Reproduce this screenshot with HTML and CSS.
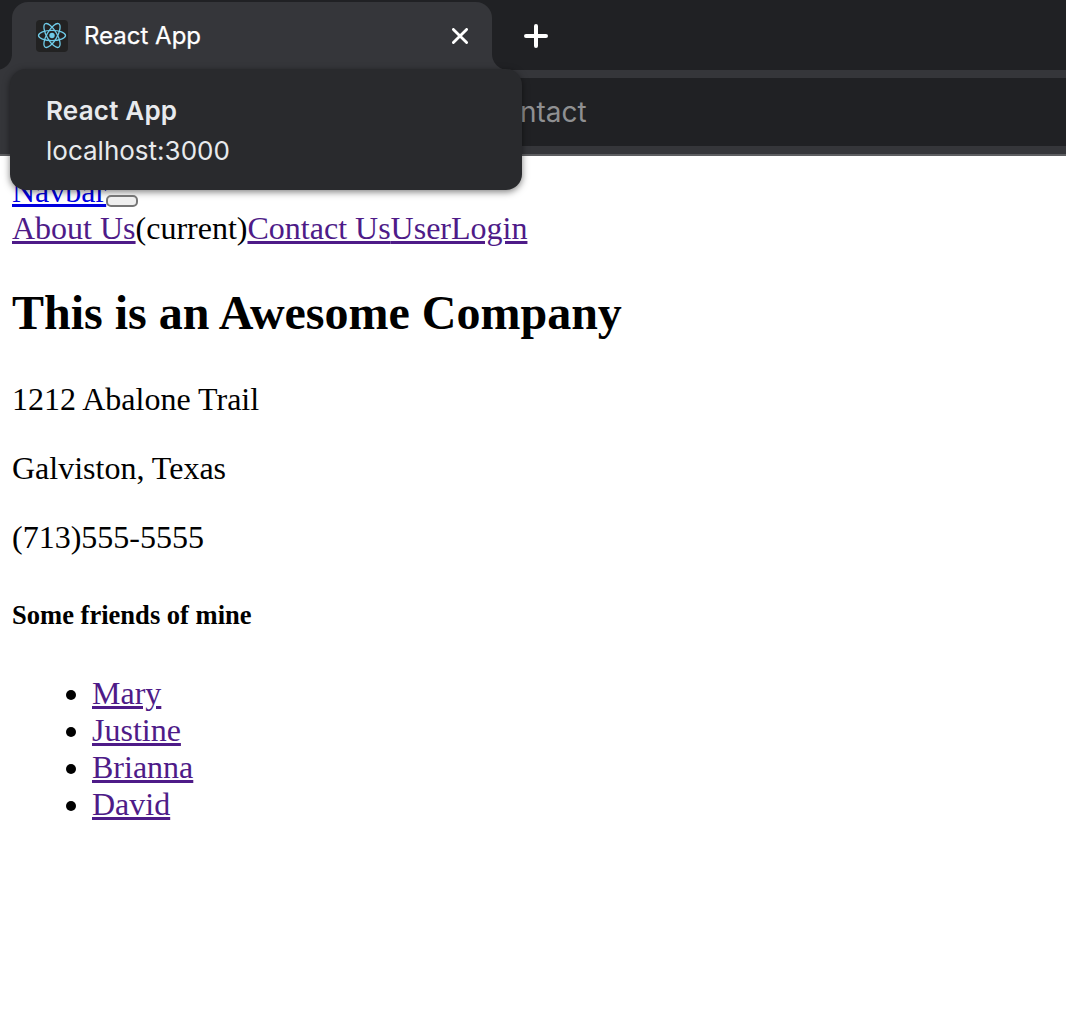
FILE: index.html
```html
<!DOCTYPE html>
<html lang="en">
<head>
<meta charset="utf-8">
<title>React App</title>
<link rel="stylesheet" href="styles.css">
</head>
<body>
<header class="browser">
  <div class="tabstrip">
    <div class="tab">
      <svg class="favicon" viewBox="0 0 32 32" width="32" height="32">
        <rect width="32" height="32" rx="4" fill="#222"/>
        <g fill="none" stroke="#6fcbe8" stroke-width="1.3">
          <ellipse cx="16" cy="15.5" rx="13.5" ry="5.1"/>
          <ellipse cx="16" cy="15.5" rx="13.5" ry="5.1" transform="rotate(60 16 15.5)"/>
          <ellipse cx="16" cy="15.5" rx="13.5" ry="5.1" transform="rotate(120 16 15.5)"/>
        </g>
        <circle cx="16" cy="15.5" r="2.7" fill="#6fcbe8"/>
      </svg>
      <span class="tab-title">React App</span>
      <svg class="close" viewBox="0 0 16 16" width="16" height="16"><path d="M1.4 1.4 14.6 14.6M14.6 1.4 1.4 14.6"/></svg>
    </div>
    <svg class="new-tab" viewBox="0 0 24 24" width="24" height="24"><path d="M12 2V22M2 12H22"/></svg>
  </div>
  <div class="toolbar"><div class="address">ntact</div></div>
  <div class="hover-card">
    <strong class="card-title">React App</strong>
    <span class="card-host">localhost:3000</span>
  </div>
</header>
<main class="page">
  <nav class="nav">
    <div><a class="link brand" href="#">Navbar</a><button class="toggler" type="button"></button></div>
    <div><a class="link" href="#">About Us</a><span>(current)</span><a class="link" href="#">Contact Us</a><a class="link" href="#">User</a><a class="link" href="#">Login</a></div>
  </nav>
  <h1 class="title">This is an Awesome Company</h1>
  <p class="line">1212 Abalone Trail</p>
  <p class="line">Galviston, Texas</p>
  <p class="line">(713)555-5555</p>
  <h2 class="subtitle">Some friends of mine</h2>
  <ul class="friends">
    <li><a class="link" href="#">Mary</a></li>
    <li><a class="link" href="#">Justine</a></li>
    <li><a class="link" href="#">Brianna</a></li>
    <li><a class="link" href="#">David</a></li>
  </ul>
</main>
</body>
</html>
```
FILE: styles.css
```css
body {
  margin: 0;
  background: #fff;
  color: #000;
  font: 32px/37px "Liberation Serif", "Times New Roman", serif;
}
.browser {
  position: relative;
  height: 156px;
  font-family: Inter, sans-serif;
}
.tabstrip {
  box-sizing: border-box;
  display: flex;
  align-items: flex-start;
  height: 70px;
  padding: 2px 0 0 12px;
  background: #202124;
}
.tab {
  position: relative;
  box-sizing: border-box;
  display: flex;
  align-items: center;
  width: 480px;
  height: 68px;
  padding: 0 24px;
  border-radius: 16px 16px 0 0;
  background: #35363a;
}
.tab::before,
.tab::after {
  content: "";
  position: absolute;
  bottom: 0;
  width: 16px;
  height: 16px;
}
.tab::before {
  right: 100%;
  background: radial-gradient(circle at 0 0, #202124 15.5px, #35363a 16.5px);
}
.tab::after {
  left: 100%;
  background: radial-gradient(circle at 100% 0, #202124 15.5px, #35363a 16.5px);
}
.tab-title {
  margin: 0 auto 0 16px;
  color: #fff;
  font-size: 24px;
  line-height: 32px;
  -webkit-text-stroke: 0.25px #fff;
}
.close,
.new-tab {
  fill: none;
  stroke: #fff;
  stroke-linecap: round;
}
.close {
  stroke-width: 2.8;
}
.new-tab {
  margin: 22px 0 0 32px;
  stroke-width: 4;
}
.toolbar {
  box-sizing: border-box;
  height: 86px;
  padding: 8px 0;
  border-bottom: 2px solid #5d5e61;
  background: #35363a;
}
.address {
  box-sizing: border-box;
  height: 68px;
  margin-left: 20px;
  padding-left: 500px;
  background: #202124;
  color: #8f9092;
  font-size: 28px;
  line-height: 69px;
}
.hover-card {
  position: absolute;
  left: 10px;
  top: 69px;
  box-sizing: border-box;
  display: flex;
  flex-direction: column;
  width: 512px;
  height: 121px;
  padding: 22px 36px;
  border-radius: 16px;
  background: #292a2d;
  box-shadow: 0 2px 7px rgba(0, 0, 0, 0.5);
  color: #e8eaed;
  font-size: 26px;
  line-height: 40px;
}
.card-title {
  font-weight: 600;
  letter-spacing: 0.2px;
}
.page {
  display: flow-root;
  padding: 17px 12px;
}
.link {
  color: #4e1b88;
  text-decoration: underline;
  text-decoration-thickness: 3px;
  text-underline-offset: 2px;
}
.brand {
  color: #0000e0;
}
.nav {
  height: 74px;
}
.toggler {
  box-sizing: border-box;
  width: 32px;
  height: 12px;
  padding: 0;
  border: 2px solid #767676;
  border-radius: 5px;
  background: #efefef;
  vertical-align: -6px;
  transform: translateY(-3px);
}
.title {
  margin: 38px 0 40.68px;
  font-size: 48px;
  line-height: 55px;
}
.line {
  margin: 32px 0;
}
.subtitle {
  margin: 44.35px 0 45px;
  font-size: 26.56px;
  line-height: 30px;
}
.friends {
  margin: 0;
  padding-left: 80px;
}
```
